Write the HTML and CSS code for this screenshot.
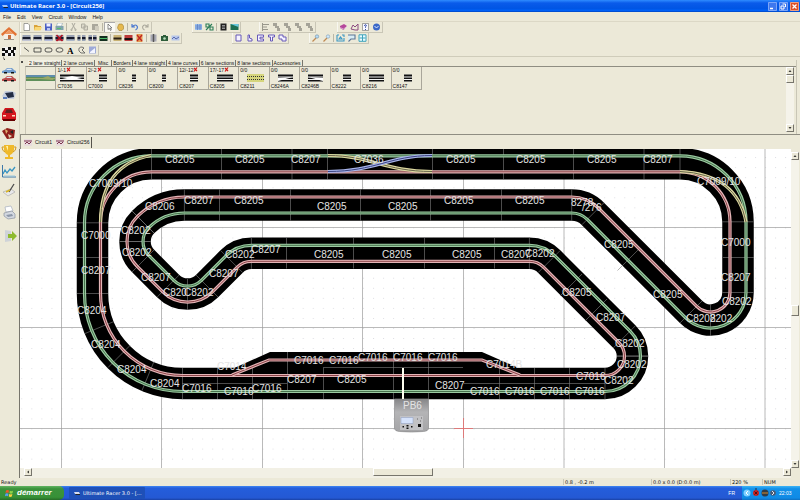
FILE: index.html
```html
<!DOCTYPE html>
<html lang="en">
<head>
<meta charset="utf-8">
<title>Ultimate Racer 3.0 - [Circuit256]</title>
<link rel="stylesheet" href="styles.css">
</head>
<body>
<header class="titlebar">
  <svg class="app-icon" viewBox="0 0 8 8"><path d="M1 3h5l1 2H2z" fill="#9cc3ff"/><path d="M2 5h5v1H3z" fill="#222"/></svg>
  <h1>Ultimate Racer 3.0 - [Circuit256]</h1>
  <div class="window-buttons">
    <button aria-label="Minimize"><svg viewBox="0 0 9 9"><path d="M2 6.5h3" stroke="#fff" stroke-width="1.5"/></svg></button>
    <button aria-label="Restore"><svg viewBox="0 0 9 9"><path d="M3.5 2h3v3M2 4h3v3H2z" stroke="#fff" fill="none"/></svg></button>
    <button class="close" aria-label="Close"><svg viewBox="0 0 9 9"><path d="M2.5 2.5l4 4m0-4l-4 4" stroke="#fff" stroke-width="1.3"/></svg></button>
  </div>
</header>
<nav class="menu">
  <button>File</button><button>Edit</button><button>View</button><button>Circuit</button><button>Window</button><button>Help</button>
</nav>
<div class="workspace">
  <aside class="sidebar" id="sidebar"></aside>
  <main class="main">
    <div class="toolbars" id="toolbars"></div>
    <section class="parts">
      <button class="parts-close" aria-label="Close panel"><svg viewBox="0 0 4 4"><path d="M1 1l2 2m0-2L1 3" stroke="#222" stroke-width=".8"/></svg></button>
      <div class="parts-body">
        <div class="part-tabs">
          <button class="active">2 lane straight</button><button>2 lane curves</button><button>Misc</button><button>Borders</button><button>4 lane straight</button><button>4 lane curves</button><button>6 lane sections</button><button>8 lane sections</button><button>Accessories</button>
        </div>
        <div class="part-panel">
          <div class="part-list" id="parts"></div>
          <div class="vscroll">
            <button aria-label="Scroll up"><svg viewBox="0 0 8 8"><path d="M2 5h4L4 3z"/></svg></button>
            <span class="grip"></span>
            <button class="last" aria-label="Scroll down"><svg viewBox="0 0 8 8"><path d="M2 3h4L4 5z"/></svg></button>
          </div>
        </div>
      </div>
    </section>
    <div class="doc-tabs">
      <button><svg viewBox="0 0 8 7"><path d="M0 0h8v7H0z" fill="#e8dcdc"/><path d="M0 2h8M1 5l2-2 2 2 2-2" stroke="#7c3450" fill="none"/></svg>Circuit1</button>
      <button class="active"><svg viewBox="0 0 8 7"><path d="M0 0h8v7H0z" fill="#e8dcdc"/><path d="M0 2h8M1 5l2-2 2 2 2-2" stroke="#7c3450" fill="none"/></svg>Circuit256</button>
    </div>
    <div class="canvas-area">
      <svg class="circuit" viewBox="20 149 771 319" preserveAspectRatio="xMinYMin slice" role="img" aria-label="Circuit256">
        <defs>
          <pattern id="dots" x="61.5" y="227.5" width="10.05" height="10.05" patternUnits="userSpaceOnUse"><path d="M0 0h1v1H0z" fill="#dcdce2"/></pattern>
          <linearGradient id="base" x1="0" y1="0" x2="0" y2="1"><stop offset="0" stop-color="#858587"/><stop offset=".4" stop-color="#b4b4b6"/><stop offset="1" stop-color="#a4a4a6"/></linearGradient>
        </defs>
        <rect x="20" y="149" width="2000" height="1500" fill="url(#dots)"/>
        <path class="grid-line" d="M61.5 149V468M161.5 149V468M262.5 149V468M362.5 149V468M463.5 149V468M564 149V468M664.5 149V468M765 149V468M20 227.5H791M20 327.5H791M20 428.5H791"/>
        <g id="track"></g>
        <g id="base-unit">
          <path d="M394.5 399h34v29q0 3-5 3.500q-12 1-24 0q-5-.5-5-3.500z" fill="url(#base)" stroke="#8c8c8e" stroke-width=".7"/>
          <path d="M400 416h23v14h-23z" fill="#c2c2c5"/>
          <path d="M401 417.500h12v6h-12z" fill="#d5e2fb" stroke="#8c9cc0" stroke-width=".5"/>
          <path d="M402.500 426h1.500v1.500h-1.500zM406.500 425h2v1.500h-2zM406.500 427.500h2v1.500h-2zM411 426h1.500v1.500h-1.500zM418 424h3v3h-3z" fill="#111"/>
          <path d="M417 419h1m3-1h1m-2 3h1" stroke="#666"/>
        </g>
        <path d="M403 368v31" stroke="#fffff0" stroke-width="2"/>
        <path d="M463.500 418v20M454 428.500h19" stroke="#e66a6a" stroke-width=".8"/>
        <g id="labels"></g>
      </svg>
      <div class="vscroll canvas-v">
        <button aria-label="Scroll up"><svg viewBox="0 0 8 8"><path d="M2 5h4L4 3z"/></svg></button>
        <span class="grip middle"></span>
        <button class="last" aria-label="Scroll down"><svg viewBox="0 0 8 8"><path d="M2 3h4L4 5z"/></svg></button>
      </div>
      <div class="hscroll">
        <button aria-label="Scroll left"><svg viewBox="0 0 8 8"><path d="M5 2v4L3 4z"/></svg></button>
        <span class="grip"></span>
        <button aria-label="Scroll right"><svg viewBox="0 0 8 8"><path d="M3 2v4l2-2z"/></svg></button>
      </div>
    </div>
  </main>
</div>
<div class="statusbar">
  <span>Ready</span><span>0.8 , -0.2 m</span><span>0.0 x 0.0 (D:0.0 m)</span><span>220 %</span><span>NUM</span>
</div>
<footer class="taskbar">
  <button class="start"><svg viewBox="0 0 9 9"><path d="M1 1.500q1.500-1 3 0L3.500 4q-1.500-.8-3 0z" fill="#f0552b"/><path d="M4.800 1.800q1.500.8 3.200 0L7.500 4.300q-1.500.8-3 0z" fill="#8fd44a"/><path d="M.4 4.800q1.500-.9 3 0L3 7.200q-1.500-.8-3 0z" fill="#5b9cf5"/><path d="M4.200 5q1.500.8 3.200 0L6.800 7.500q-1.500.8-3 0z" fill="#fbd13c"/></svg>démarrer</button>
  <button class="task"><svg viewBox="0 0 8 8"><path d="M1 3h5l1 2H2z" fill="#d5dcf0"/><path d="M2 5h5v1H3z" fill="#222"/></svg>Ultimate Racer 3.0 - [...</button>
  <span class="lang">FR</span>
  <div class="tray">
    <svg viewBox="0 0 34 10"><circle cx="5" cy="5" r="3.500" fill="#7fd0ff"/><path d="M6 3L4 5l2 2" stroke="#fff" fill="none"/><circle cx="14" cy="5" r="3" fill="#c92222"/><path d="M12.500 3.500l3 3m0-3l-3 3M14 0v2" stroke="#3b0a0a" stroke-width=".8"/><circle cx="23" cy="5" r="3.500" fill="#303c46"/><path d="M20 5h6" stroke="#d08a2c"/><circle cx="31" cy="5" r="2.800" fill="#4a5a74"/><path d="M30 3l2 2-2 2" stroke="#e0e6f0" fill="none"/></svg>
    <span>22:03</span>
  </div>
</footer>
<script src="script.js"></script>
</body>
</html>
```
FILE: styles.css
```css
* { box-sizing: border-box; }
html, body { margin: 0; height: 100%; }
body {
  display: grid;
  grid-template-rows: 12px 10px minmax(0, 1fr) 8px 14px;
  grid-template-columns: minmax(0, 1fr);
  height: 100vh;
  overflow: hidden;
  background: #ece9d8;
  color: #111;
  font: 5px/6px "Liberation Sans", Arial, sans-serif;
}
button { margin: 0; padding: 0; border: 0; background: none; color: inherit; font: inherit; }
svg { display: block; }

.titlebar {
  display: flex;
  align-items: center;
  gap: 1px;
  padding: 0 1px;
  background: linear-gradient(#2f8cff, #0a5bea 25%, #0055e4 70%, #0062f8 90%, #0040b8);
  color: #fff;
}
.app-icon { width: 8px; height: 8px; }
.titlebar h1 { flex: 1; margin: 0; font: bold 6px/8px "Open Sans", sans-serif; }
.window-buttons { display: flex; gap: 2px; }
.window-buttons button { width: 9px; height: 9px; border-radius: 1px; background: #3f78ee; box-shadow: inset 0 0 0 1px #7ba5f8; }
.window-buttons .close { background: #dd4f27; box-shadow: inset 0 0 0 1px #f0a080; }

.menu { display: flex; align-items: center; gap: 6px; padding: 0 3px; border-bottom: 1px solid #dcd8c6; }

.workspace { display: grid; grid-template-columns: 20px minmax(0, 1fr); min-height: 0; }
.sidebar { display: flex; flex-direction: column; gap: 3px; padding: 4px 1px; border-right: 1px solid #d8d4c2; }
.sidebar button { height: 16px; }
.sidebar svg { width: 16px; height: 16px; }
.sidebar .wide { margin-bottom: 4px; }
.sidebar .rule { margin-bottom: 4px; }

.main { display: grid; grid-template-rows: 35px 78px 14px minmax(0, 1fr); grid-template-columns: minmax(0, 1fr); min-height: 0; }
.toolbars { display: grid; grid-template-rows: 11px 11px 12px; border-bottom: 1px solid #cfccba; }
.tool-row { display: grid; justify-content: start; align-items: center; }
.row-1 { grid-template-columns: 172px 67px 78px auto; }
.row-2 { grid-template-columns: 212px 77px auto; }
.group { display: flex; justify-self: start; align-items: center; height: 11px; padding-left: 1px; border: solid #c9c6b6; border-width: 0 1px 1px 0; box-shadow: inset 1px 0 #f8f7f0; }
.group button { width: 11px; height: 10px; padding: 1px; }
.group .pressed { background: #fafaf4; box-shadow: inset 1px 1px #aaa; }
.group svg { width: 9px; height: 8px; }
.sep { width: 1px; height: 8px; margin: 0 1px; background: #b9b6a6; }

.parts { display: grid; grid-template-columns: 5px minmax(0, 1fr); padding: 3px 3px 0 0; border-bottom: 1px solid #8f8d82; }
.parts-close { display: flex; width: 4px; height: 4px; }
.parts-close svg { width: 4px; height: 4px; }
.parts-body { display: grid; grid-template-rows: 6px minmax(0, 1fr); border-right: 1px solid #c9c6b6; }
.part-tabs { display: flex; padding-left: 3px; }
.part-tabs button { min-width: 17px; padding: 0 1px; border-right: 1px solid #77756c; white-space: nowrap; }
.part-tabs .active { background: #f2f0e4; }
.part-panel { display: flex; justify-content: space-between; border-top: 1px solid #8f8d82; border-left: 1px solid #c9c6b6; }
.part-list { display: grid; grid-template-columns: repeat(13, 1fr); width: 396px; height: 23px; border-bottom: 1px solid #a9a69a; }
.part { display: grid; grid-template-rows: 6px 10px 6px; min-width: 0; padding: 0; border-right: 1px solid #a9a69a; text-align: left; }
.part .count { display: flex; padding-left: 1px; }
.part .count svg { width: 5px; height: 5px; }
.part .code { padding-left: 1px; }
.part .shape { width: 29px; height: 10px; }

.vscroll { display: flex; flex-direction: column; width: 8px; margin: 0 2px 2px 0; background: #f5f3ea; }
.vscroll button, .hscroll button, .grip { flex: none; background: #ece9d8; border: 1px solid; border-color: #fff #77756c #77756c #fff; }
.vscroll button, .hscroll button { width: 8px; height: 8px; }
.vscroll svg, .hscroll svg { width: 6px; height: 6px; }
.vscroll .grip { height: 8px; }
.vscroll .last { margin-top: auto; }

.doc-tabs { display: flex; align-items: center; padding-left: 1px; border-left: 1px solid #8f8d82; }
.doc-tabs button { display: flex; align-items: center; gap: 3px; height: 11px; padding: 0 2px; }
.doc-tabs .active { border-right: 1px solid #55534c; }
.doc-tabs svg { width: 8px; height: 7px; }

.canvas-area { display: grid; grid-template-columns: minmax(0, 1fr) 9px; grid-template-rows: minmax(0, 1fr) 10px; min-height: 0; border-left: 1px solid #77756c; margin-left: -1px; }
.circuit { width: 100%; height: 100%; background: #fff; }
.circuit text { font: 10px "Liberation Sans", Arial, sans-serif; fill: #e4e4e4; }
.grid-line { stroke: #9c9c9c; stroke-width: .7; fill: none; }
.road { fill: none; stroke: #000; stroke-width: 31.5; }
.pit { fill: #000; }
.lane { fill: none; stroke-width: 3.2; }
.slot { fill: none; stroke-width: 1; }
.green { stroke: #9ccba2; }
.green-slot { stroke: #47734d; }
.red { stroke: #e3b4b6; }
.red-slot { stroke: #8a4348; }
.yellow { stroke: #ddd9a0; }
.yellow-slot { stroke: #66634a; }
.blue { stroke: #a8b4ea; }
.blue-slot { stroke: #3a4380; }
.seam { fill: none; stroke: #808080; stroke-width: .6; }
.canvas-v { margin: 3px 1px 0 0; }
.canvas-v .grip.middle { height: 11px; margin-top: auto; }
.hscroll { display: flex; justify-content: space-between; padding: 0 0 0 4px; background: #f2f0e5; }
.hscroll .grip { width: 60px; height: 8px; margin-right: 10px; }

.statusbar { display: grid; grid-template-columns: minmax(0, 1fr) 88px 79px 32px 38px; align-items: center; padding-left: 1px; font-family: "DejaVu Sans", sans-serif; }
.statusbar span + span { padding-left: 1px; border-left: 1px solid #c9c6b6; }

.taskbar { display: flex; align-items: center; background: linear-gradient(#3f86f2, #245edb 15%, #2459d4 85%, #1941a5); color: #fff; }
.start { display: flex; align-items: center; gap: 3px; width: 64px; height: 14px; padding-left: 5px; border-radius: 0 5px 5px 0; background: linear-gradient(#62b562, #3b923b 20%, #379137 80%, #276b27); font: italic bold 8px/12px "Liberation Sans", Arial, sans-serif; }
.start svg { width: 9px; height: 9px; }
.task { display: flex; align-items: center; gap: 2px; width: 76px; height: 12px; margin-left: 5px; padding-left: 4px; border-radius: 1px; background: #1e50b8; font-family: "DejaVu Sans", sans-serif; white-space: nowrap; }
.task svg { width: 8px; height: 8px; }
.lang { margin-left: auto; padding-right: 7px; }
.tray { display: flex; align-items: center; gap: 3px; width: 58px; height: 14px; background: linear-gradient(#3cb4f6, #1290e9 20%, #0f8be6 85%, #0f6fc0); }
.tray svg { width: 34px; height: 10px; }
```
FILE: script.js
```js
// Toolbar glyphs, drawn on a 9 x 8 box.
const page = '<path d="M2 .5h4l1.500 1.500v5.500H2z" fill="#fff" stroke="#666" stroke-width=".6"/>';
const road = (c, extra = '') => `<path d="M.5 1h8v6h-8z" fill="#9aa2b4"/><path d="M.5 3h8v2.500h-8z" fill="#161a2c"/><path d="M1 6h7" stroke="${c}"/>${extra}`;
const line = (d, c, w = 1, f = 'none') => `<path d="${d}" stroke="${c}" stroke-width="${w}" fill="${f}"/>`;
const icons = {
  New: page,
  Open: '<path d="M1 2h3l1 1h3v4H1z" fill="#d9a33a"/><path d="M2 4h7L7.500 7.500H1z" fill="#f8d878"/>',
  Save: '<path d="M1 .5h7v7H1z" fill="#4a5fc4"/><path d="M2.500 .5h4v3h-4z" fill="#eef"/><path d="M3 5h3v2.500H3z" fill="#bcc6f0"/>',
  Print: '<path d="M2.500 0h5L6.500 3h-5z" fill="#fff" stroke="#7895a0" stroke-width=".5"/><path d="M.5 3h8v4h-8z" fill="#7fa3ad"/><path d="M2 5h4v1H2z" fill="#55c06a"/>',
  Cut: line('M3 0l3 6M6 0L3 6', '#aaa89c') + line('M2 6h1v1.500H2zM6 6h1v1.500H6z', '#aaa89c', .8),
  Copy: line('M1.500 1h3.500v4H1.500zM4 3h3.500v4H4z', '#aaa89c', .9, '#dddacb'),
  Paste: '<path d="M1 1h6v6H1z" fill="#aaa89c"/><path d="M4 3h4v5H4z" fill="#d0cdbf"/>',
  Select: line('M3 1v5.500l1.300-1.200L5.500 7.500l.8-.5-1-2H7z', '#444', .6, '#fff'),
  Pan: '<path d="M2 3l1-2h3l1.500 2v3L6 7.500H3L1.500 5z" fill="#e5b94f" stroke="#97701c" stroke-width=".5"/>',
  Undo: line('M2 1v3h3M2 4q4-4 5.500 0 0 2-2 3', '#4a78d0', 1.200),
  Redo: line('M7 1v3H4M7 4q-4-4-5.500 0 0 2 2 3', '#aaa89c', 1.100),
  Grid: '<path d="M1 1h7v6H1z" fill="#9cc0ee"/>' + line('M1 3h7M1 5h7M3.500 1v6M6 1v6', '#5272b8', .6),
  Snap: line('M1 1h3v3H1zM5 4h3v3H5zM1 7l6-6', '#2b7d57', 1.100),
  List: '<path d="M1.500 .5h6v7h-6z" fill="#222"/>' + line('M3 2.500h3M3 4h3M3 5.500h3', '#ddd', .6),
  Picture: '<path d="M.5 1h8v6h-8z" fill="#1d6f53"/><path d="M.5 1h8v3z" fill="#68c7dd"/>',
  Align: line('M1.500 0v8M2 1.500h6M2 4h4M2 6.500h5', '#99978b'),
  Arrange: '<path d="M1 0h4v3H1zM3 3h4v2H3zM5 5h3v3H5z" fill="#a5a398"/>',
  Book: '<path d="M1 3l4-2 3 2-3.500 4L1 5z" fill="#b5489b"/>' + line('M1 4.500l3.500 1.500L8 3.500', '#eedaee', .6),
  Find: line('M1 6l2-4 2 2 3-3v6H5z', '#8b4a80', 1),
  Help: '<path d="M1.500 .5h6v7h-6z" fill="#f8f8ff" stroke="#555" stroke-width=".5"/>' + line('M3.500 3q0-1.500 1.500-1.200 1.200.5-.5 2v1M4.500 6v1', '#2740a0', .9),
  About: '<circle cx="4.500" cy="4" r="3.500" fill="#3b68c8"/>' + line('M2.500 3l2 2 2-2', '#dce8ff'),
  Track1: road('#e8e8f4'), Track2: road('#ffffff'), Track3: road('#cfd6ff'),
  Delete: road('#d33', line('M1.500 1l6 6m0-6l-6 6', '#b01020', 1.600)),
  Track4: road('#bcd'), Split: road('#9ab', '<path d="M3.500 1H5v6H3.500z" fill="#ece9d8"/>'),
  Join: road('#88a', '<path d="M4 1h1v6H4z" fill="#ece9d8"/>'), Green: '<path d="M.5 2h8v5h-8z" fill="#14301f"/>' + line('M.5 4.500h8', '#4ebd6a'),
  Border: '<path d="M.5 1h8v6h-8z" fill="#c8b173"/><path d="M.5 3.500h8v2h-8z" fill="#2a2114"/>',
  Rail: '<path d="M.5 1h8v6h-8z" fill="#bb3a3a"/><path d="M.5 4h8v2h-8z" fill="#181010"/>',
  Flag: '<path d="M1.500 0h6v8h-6z" fill="#e49b52"/>' + line('M2 1l5 6m0-6L2 7', '#c02222', 1.200),
  Columns: '<path d="M1.500 .5h6v7h-6z" fill="#a9a9b4"/>' + line('M4.500 0v8', '#555', 1.500),
  Camera: '<path d="M1 2h7v5H1zM3 1h3v1H3z" fill="#2d5d3a"/><circle cx="4.500" cy="4.500" r="1.300" fill="#b9dfbd"/>',
  View3D: '<path d="M.5 1.500h8v5h-8z" fill="#b7c6ea"/>' + line('M1 5l2-2 2 2 3-2', '#5a6cae'),
  Shape1: line('M2 1h5v6H2z', '#6659b8', 1, '#f5f3ff'), Shape2: line('M3 1h1.500v3L7 5v2H3z', '#6659b8', 1, '#f5f3ff'),
  Shape3: line('M7.500 1H1.500v6h6V5H4V3.200h3.500z', '#6659b8', 1, '#f5f3ff'), Shape4: line('M1.500 1h6v2H5.500v4h-2V3h-2z', '#6659b8', 1, '#f5f3ff'),
  Shape5: line('M1 1h4v2h3v4H4V5H1z', '#6659b8', 1, '#f5f3ff'),
  ZoomIn: line('M1.500 7.500L5 4', '#c08a52', 1.300) + '<circle cx="6" cy="2.500" r="1.700" fill="#b7dcf6" stroke="#6a8aa4" stroke-width=".6"/>',
  ZoomOut: line('M1.500 7.500L5 4', '#c08a52', 1.300) + '<circle cx="6" cy="2.500" r="1.700" fill="#cfe8fb" stroke="#7a9ab4" stroke-width=".6"/>',
  Fit: line('M1 1h2M6 1h2v2M1 1v6h7V4M3 5l1.500-2L6 5z', '#3b98c4', 1.100), Region: line('M1 1h7v4H4L1.500 7.500', '#5d7696', 1.100, '#d8ecf5'),
  Center: line('M1 .8h7v6.500H1zM4.500 1v6M1.500 4h6', '#3fa3bb', 1, '#e8fbff'),
  Line: line('M2 1.500l5 4', '#333', .8), Rect: line('M1 2h7v4H1z', '#333', .8), Rounded: '<rect x="1" y="2" width="7" height="4" rx="2" fill="none" stroke="#333" stroke-width=".8"/>',
  Ellipse: '<ellipse cx="4.500" cy="4" rx="3.500" ry="2.200" fill="none" stroke="#333" stroke-width=".8"/>',
  Text: '<text x="1" y="7.500" font-family="Liberation Serif" font-size="9" font-weight="bold">A</text>',
  Polygon: line('M2 5q-1-4 3-4L7 2 5 4l3 3H4z', '#555', .8), Image: '<path d="M1 .5h7v7H1z" fill="#9eaad8"/><path d="M2 6l5-4v5H2z" fill="#f3f5ff"/>'
};
const rows = [
  ['New Open Save Print | Cut Copy Paste | Select Pan | Undo Redo', 'Grid Snap | List Picture', 'Align Arrange Arrange Arrange Arrange', 'Book Find Help About'],
  ['Track1 Track2 Track3 Delete Track4 Split Join Green | Border Rail Flag | Columns Camera View3D', 'Shape1 Shape2 Shape3 Shape4 Shape5', 'ZoomIn ZoomOut | Fit Region Center'],
  ['Line Rect Rounded Ellipse Text Polygon Image']
];
document.getElementById('toolbars').innerHTML = rows.map((groups, i) =>
  `<div class="tool-row row-${i + 1}">` + groups.map(g => '<div class="group">' + g.split(' ').map(n =>
    n === '|' ? '<span class="sep"></span>' :
    `<button${n === 'Select' ? ' class="pressed"' : ''} aria-label="${n}"><svg viewBox="0 0 9 8">${icons[n]}</svg></button>`
  ).join('') + '</div>').join('') + '</div>').join('');

// Sidebar pictures, drawn on a 16 x 16 box.
const car = (y, c) => `<path d="M1 ${y + 3}l3-1 2-2h5l2 2 2 1v2H1z" fill="${c}"/><path d="M5 ${y + 2}l1.500-1.300H10L11 ${y + 2}z" fill="#dfe8f4"/><path d="M3 ${y + 4}h3v1.500H3zM10 ${y + 4}h3v1.500h-3z" fill="#111"/>`;
const side = [
  ['Home', '<path d="M3 8h10v6H3z" fill="#f6efe6"/><path d="M0 8l8-7 8 7-1.500 2L8 4 1.500 10z" fill="#e27436"/><path d="M3.500 8L8 4l4.500 4z" fill="#ee9a64"/><path d="M7 9h3v5H7z" fill="#c66b3a"/><path d="M3 13.500h10" stroke="#9a9488"/>'],
  ['Race', '<path d="M1 3q4-2 7 0t7-1l-1 9q-4 2-7 0t-5 1z" fill="#f4f4f4"/><path d="M1 3h3v3H1zM7 2h3v3H7zM4 5h3v3H4zM10 5h3v3h-3zM12 2h3v3h-3zM1 8h3v3H1zM7 8h3v3H7zM12 8h2v3h-2zM2 11l2 4H3z" fill="#111"/>', 'wide'],
  ['Cars', car(0, '#6f9acb') + car(8, '#bb4a4a')],
  ['Driver car', '<path d="M1 9l3-5h7l4 2-2 6H4z" fill="#c7cfdd"/><path d="M4 6l8-1 1 5-6 1z" fill="#222c44"/><path d="M2 10h4v2H2z" fill="#5a7bb8"/>'],
  ['Red car', '<path d="M1 7l3-5h8l3 5v7H1z" fill="#d4151d"/><path d="M4 7l1.500-3.500h5L12 7z" fill="#60201f"/><path d="M2 9h3v1.500H2zM11 9h3v1.500h-3z" fill="#ffd7c0"/><path d="M2 13h12v2H2z" fill="#600"/>'],
  ['Drivers', '<path d="M1 6l5-3 8 2-1 8-7 1z" fill="#8f1f1b"/><path d="M4 4l3 2-2 3z" fill="#e0b070"/><path d="M9 7l3-2v4z" fill="#222"/><path d="M7 9l4 2-3 2z" fill="#e5d3b3"/>'],
  ['Trophies', '<path d="M3 1h10v5q-1 4-4 5v2h3v2H4v-2h3v-2Q4 10 3 6z" fill="#efb92b"/><path d="M3 3H1q0 4 3 5M13 3h2q0 4-3 5" fill="none" stroke="#d29c1f"/><path d="M5 2h2v5z" fill="#fff2a8"/>'],
  ['Statistics', '<path d="M1.500 2v12H15" fill="none" stroke="#3d78a8"/><path d="M2 11l2-4 2 3 3-4 2 2 3-4" fill="none" stroke="#3894c2" stroke-width="1.300"/><path d="M3 13h11" stroke="#9bc8df"/>'],
  ['Settings', '<path d="M2 10l8-3 4 3-7 4z" fill="#e8e8ea" stroke="#999" stroke-width=".5"/><path d="M8 10l5-8" stroke="#4a4a4a" stroke-width="1.300"/><path d="M5 10l4-2" stroke="#d8b422" stroke-width="1.500"/>', 'rule'],
  ['Print', '<path d="M4 2l6-1 2 5-7 1z" fill="#fff" stroke="#98a3b5" stroke-width=".6"/><path d="M3 8l8-2 3 3v4l-7 1-4-3z" fill="#d3d8e0" stroke="#7e8796" stroke-width=".6"/><path d="M5 10l6-1 1 2-5 1z" fill="#8d97a8"/>', 'wide'],
  ['Exit', '<path d="M4 2l6 1v10l-6 1z" fill="#cfd3d8"/><path d="M7 6h4V3l5 5-5 5v-3H7z" fill="#8fba2f"/>']
];
document.getElementById('sidebar').innerHTML = side.map(([n, d, c]) =>
  `<button class="${c || ''}" aria-label="${n}"><svg viewBox="0 0 16 16">${d}</svg></button>`).join('');

// Part catalogue: count, code, left edge of the piece, missing flag.
const bars = (x, w) => `<path d="M${x} 1.500h${w}v7H${x}z" fill="#f4f4f4"/><path d="M${x} 1.500h${w}v2H${x}zM${x} 4.500h${w}v1.500H${x}zM${x} 7h${w}v1.500H${x}z" fill="#111"/>`;
const parts = [
  ['', '', '<path d="M0 2h29v6H0z" fill="#5f8f5a"/><path d="M0 2h29v2H0z" fill="#5f8dac"/><path d="M0 5h29v1H0zM14 6l8-3 6 4z" fill="#9aa968"/>'],
  ['1/-1', 'C7036', bars(4, 24) + '<path d="M6 5l10-2 10 2-10 2z" fill="#fff"/>', 1],
  ['2/-2', 'C7000', bars(12, 8), 1], ['0/0', 'C8236', bars(15, 4)], ['0/0', 'C8200', bars(14, 4)],
  ['12/-12', 'C8207', bars(12, 8), 1], ['17/-17', 'C8205', bars(8, 16), 1],
  ['0/0', 'C8211', '<path d="M8 1h17v8H8z" fill="#d5d57c"/><path d="M8 3.500h17M8 6.500h17" stroke="#333" stroke-dasharray="1 1"/>'],
  ['0/0', 'C8246A', bars(8, 15) + '<path d="M8 5l15-1-15 4z" fill="#fff"/>'],
  ['0/0', 'C8246B', bars(8, 15) + '<path d="M8 4l15 4V5z" fill="#fff"/>'],
  ['0/0', 'C8222', bars(12, 8)], ['0/0', 'C8216', bars(8, 15)], ['0/0', 'C8147', bars(12, 8)]
];
document.getElementById('parts').innerHTML = parts.map(([n, code, s, miss]) =>
  `<button class="part"><span class="count">${n}${miss ? '<svg viewBox="0 0 5 5"><path d="M1 4.500l3-4M1 1l3 3" stroke="#d01818" stroke-width="1.200"/></svg>' : ''}</span><svg class="shape" viewBox="0 0 29 10">${s}</svg><span class="code">${code}</span></button>`).join('');

// Circuit centre line: corners with the radius of each curve.
const corners = [
  [738, 163.8, 58], [738, 358.9, 27.5], [584.1, 205, 30], [160.2, 205, 58.6], [135, 230.1, 27.5],
  [135, 252.9, 27.5], [187.6, 305.5, 27.5], [239.8, 253.3, 28], [541, 253.3, 28],
  [632.5, 344.8, 27.5], [632.5, 383.5, 27.5], [92.5, 383.5, 90], [92.5, 163.8, 59]
];
// Path that runs parallel to the centre line, at a distance to its right,
// and the joints across the road at both ends of every curve.
let joints = '';
function lanePath(off) {
  const n = corners.length;
  let d = '';
  joints = '';
  corners.forEach(([x, y, r], i) => {
    const [px, py] = corners[(i + n - 1) % n], [qx, qy] = corners[(i + 1) % n];
    const l1 = Math.hypot(x - px, y - py), l2 = Math.hypot(qx - x, qy - y);
    const a = [(x - px) / l1, (y - py) / l1], b = [(qx - x) / l2, (qy - y) / l2];
    const cross = a[0] * b[1] - a[1] * b[0], dot = a[0] * b[0] + a[1] * b[1];
    const t = r * Math.tan(Math.acos(dot) / 2), rr = cross > 0 ? r - off : r + off;
    const p = [x - a[0] * t - a[1] * off, y - a[1] * t + a[0] * off];
    const q = [x + b[0] * t - b[1] * off, y + b[1] * t + b[0] * off];
    d += `${i ? 'L' : 'M'}${p}A${rr} ${rr} 0 0 ${cross > 0 ? 1 : 0} ${q}`;
    [[x - a[0] * t, y - a[1] * t, a], [x + b[0] * t, y + b[1] * t, b]].forEach(([jx, jy, v]) => {
      joints += `M${jx - v[1] * 15.5} ${jy + v[0] * 15.5}L${jx + v[1] * 15.5} ${jy - v[0] * 15.5}`;
    });
  });
  return d + 'Z';
}
const lane = (d, c) => `<path class="lane ${c}" d="${d}"/><path class="slot ${c}-slot" d="${d}"/>`;
const vs = (xs, y, h = 31) => xs.map(x => `M${x} ${y}v${h}`).join('');
const roadPath = lanePath(0);
const seams = joints + vs([221.5, 292, 327.5, 432.5, 503.5, 573.5, 644], 148.5)
  + vs([219.5, 290.5, 360.5, 430.5, 501.5], 189.5)
  + vs([286.5, 353.5, 424.5, 494.5], 237.5)
  + vs([217.5, 252.5, 323.5, 499.5, 534.5, 569.5], 368)
  + vs([287.5, 393.5, 428.5], 352, 47)
  + 'M77 257.500h31M723 257.500h31M182 383.500h105M464 383.500h141M323 367.500h140'
  + 'M85 333.500l29-12M108 367.500l22-22M142 390.500l12-29M187.500 279v31M710.500 305v31M690.500 312.500l-.5 0M639.500 248.500l-22 22M613 376l20 3'
  + 'M582 274l-22 22M607 299l-22 22M730 297l20 8';
const pit = 'M232 375L269 360H482L520 375';
document.getElementById('track').innerHTML =
  `<path class="road" d="${roadPath}"/><path class="pit" d="M232 369L270 352H482L521 369z"/>`
  + `<path class="seam" d="${seams}"/>`
  + lane(lanePath(-8), 'green') + lane(lanePath(8), 'red') + lane(pit, 'red')
  + lane('M328 155.500C370 155.500 385 171.500 432 171.500', 'yellow') + lane('M328 171.500C375 171.500 390 155.500 432 155.500', 'blue')
  + lane('M151 155.500Q101 165 100.500 222', 'yellow') + lane('M680 171.500Q737 174 746 222', 'yellow');

const labels = `165 163 C8205|235 163 C8205|291 163 C8207|354 163 C7036|446 163 C8205|516 163 C8205|587 163 C8205|643 163 C8207
89 187 C7009/10|697 185 C7009/10|81 239 C7000|81 274 C8207|77 314 C8204|91 348 C8204|117 373 C8204|150 387 C8204
182 392 C7016|224 395 C7016|252 392 C7016|217 370 C7014|294 364 C7016|329 364 C7016|358 361 C7016|393 361 C7016|428 361 C7016
287 383 C8207|337 383 C8205|435 389 C8207|470 395 C7016|505 395 C7016|540 395 C7016|575 395 C7016|576 380 C7016|486 368 C7014B
604 384 C8202|617 368 C8202|615 347 C8202|596 321 C8207|562 296 C8205|525 257 C8202|501 258 C8207|452 258 C8205|382 258 C8205|314 258 C8205
251 253 C8207|225 258 C8202|209 277 C8207|184 296 C8202|163 296 C820|141 281 C8207|122 256 C8202|121 234 C8202|145 210 C8206
184 204 C8207|234 204 C8205|317 210 C8205|388 210 C8205|444 204 C8205|515 204 C8205|571 206 8278|582 211 /276
604 248 C8205|653 298 C8205|722 305 C8202|721 281 C8207|721 246 C7000|686 322 C8202|710 322 8202|403 409 PB6`;
document.getElementById('labels').innerHTML = labels.split(/[|\n]/).map(s => {
  const [x, y, t] = s.split(' ');
  return `<text x="${x}" y="${y}">${t}</text>`;
}).join('');
```
